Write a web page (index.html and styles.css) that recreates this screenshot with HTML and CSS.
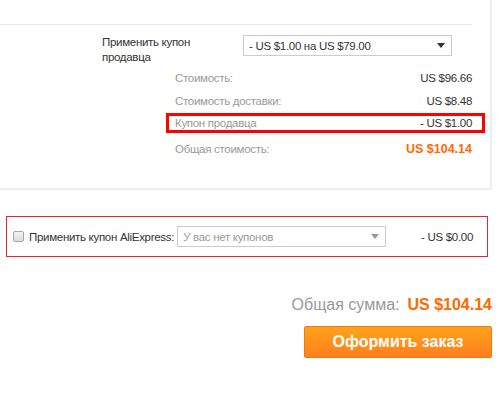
FILE: index.html
```html
<!DOCTYPE html>
<html lang="ru">
<head>
<meta charset="utf-8">
<link rel="stylesheet" href="styles.css">
</head>
<body>
<div class="card">
  <div class="card-top"></div>
  <div class="seller">
    <div class="seller-label">Применить купон<br>продавца</div>
    <div class="select seller-select">
      <span>- US $1.00 на US $79.00</span>
      <span class="arrow dark"></span>
    </div>
  </div>
  <div class="summary">
    <div class="row"><span class="lbl">Стоимость:</span><span class="val">US $96.66</span></div>
    <div class="row"><span class="lbl">Стоимость доставки:</span><span class="val">US $8.48</span></div>
    <div class="row hl"><span class="lbl">Купон продавца</span><span class="val">- US $1.00</span></div>
    <div class="row total"><span class="lbl">Общая стоимость:</span><span class="val orange">US $104.14</span></div>
  </div>
</div>
<div class="ae">
  <span class="checkbox"></span>
  <span class="ae-label">Применить купон AliExpress:</span>
  <div class="select ae-select">
    <span>У вас нет купонов</span>
    <span class="arrow light"></span>
  </div>
  <span class="ae-val">- US $0.00</span>
</div>
<div class="grand">
  <span class="grand-lbl">Общая сумма:</span>
  <span class="grand-val">US $104.14</span>
</div>
<div class="actions">
  <button class="order">Оформить заказ</button>
</div>
</body>
</html>
```
FILE: styles.css
```css
* { box-sizing: border-box; }
body {
  margin: 0;
  background: #fff;
  font-family: "Liberation Sans", Arial, sans-serif;
  font-size: 11.5px;
  letter-spacing: -0.3px;
  color: #333;
}
.card {
  width: 492px;
  height: 190px;
  border-right: 2px solid #eee;
  border-bottom: 2px solid #eee;
}
.card-top {
  width: 472px;
  height: 25px;
  border-bottom: 1px solid #e8e8e8;
}
.seller {
  display: flex;
  padding-left: 102px;
  margin-top: 10px;
}
.seller-label {
  width: 141px;
  line-height: 15px;
  color: #333;
}
.select {
  display: flex;
  align-items: center;
  justify-content: space-between;
  border: 1px solid #ccc;
  height: 21px;
  padding: 0 6px 0 5px;
  background: #fff;
}
.seller-select { width: 209px; }
.arrow {
  width: 0;
  height: 0;
  border-left: 4px solid transparent;
  border-right: 4px solid transparent;
  border-top: 5px solid #333;
}
.arrow.light { border-top-color: #999; }
.summary {
  margin-left: 166px;
  width: 319px;
  margin-top: 3px;
  display: flex;
  flex-direction: column;
  gap: 3px;
}
.row {
  display: flex;
  justify-content: space-between;
  align-items: center;
  height: 20px;
  border: 3px solid transparent;
  padding: 0 10px 0 6px;
}
.row.hl { border-color: #f00; margin-top: -1px; }
.lbl { color: #999; }
.val { color: #333; }
.row.total { height: 26px; margin-top: 0; }
.orange { color: #ff6a00; font-size: 12.5px; font-weight: bold; letter-spacing: 0; }
.ae {
  margin: 26px 0 0 6px;
  width: 482px;
  height: 41px;
  border: 1px solid #e4262d;
  display: flex;
  align-items: center;
  padding: 0 14px 0 6px;
}
.checkbox {
  width: 11px;
  height: 11px;
  border: 1px solid #a8a8a8;
  border-radius: 2px;
  background: linear-gradient(#f4f4f4, #dcdcdc);
  margin-right: 5px;
}
.ae-label { margin-right: 3px; }
.ae-select { width: 209px; color: #999; }
.ae-val { margin-left: auto; }
.grand {
  display: flex;
  justify-content: flex-end;
  align-items: baseline;
  gap: 8px;
  margin-top: 39px;
  padding-right: 8px;
  font-size: 16px;
  letter-spacing: 0;
}
.grand-lbl { color: #999; }
.grand-val { color: #ff6a00; font-weight: bold; }
.actions {
  display: flex;
  justify-content: flex-end;
  padding-right: 8px;
  margin-top: 12px;
}
.order {
  width: 188px;
  height: 32px;
  border: 1px solid #f07a10;
  border-radius: 2px;
  background: linear-gradient(#ffa31a, #ff7e1e);
  color: #fff;
  font-family: "Liberation Sans", Arial, sans-serif;
  font-size: 16px;
  font-weight: bold;
  box-shadow: 0 1px 1px rgba(0,0,0,0.15);
}
```
